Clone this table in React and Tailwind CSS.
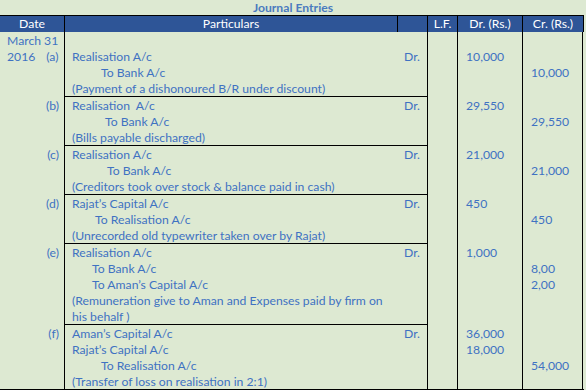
import React from "react"

const entries = [
  {
    date: [
      <span key="1">March 31</span>,
      <span key="2" className="flex"><span>2016</span><span className="ml-[11px]">(a)</span></span>,
    ],
    dateAlign: "left",
    lines: [
      { text: "" },
      { text: "Realisation A/c", dr: true, amt: "10,000" },
      { text: "To Bank A/c", indent: 29, cr: "10,000" },
      { text: "(Payment of a dishonoured B/R under discount)" },
    ],
  },
  {
    date: ["(b)"],
    lines: [
      { text: "Realisation  A/c", dr: true, amt: "29,550" },
      { text: "To Bank A/c", indent: 33, cr: "29,550" },
      { text: "(Bills payable discharged)" },
    ],
  },
  {
    date: ["(c)"],
    lines: [
      { text: "Realisation A/c", dr: true, amt: "21,000" },
      { text: "To Bank A/c", indent: 35, cr: "21,000" },
      { text: "(Creditors took over stock & balance paid in cash)" },
    ],
  },
  {
    date: ["(d)"],
    lines: [
      { text: "Rajat’s Capital A/c", dr: true, amt: "450" },
      { text: "To Realisation A/c", indent: 23, cr: "450" },
      { text: "(Unrecorded old typewriter taken over by Rajat)" },
    ],
  },
  {
    date: ["(e)"],
    lines: [
      { text: "Realisation A/c", dr: true, amt: "1,000" },
      { text: "To Bank A/c", indent: 20, cr: "8,00" },
      { text: "To Aman’s Capital A/c", indent: 20, cr: "2,00" },
      { text: "(Remuneration give to Aman and Expenses paid by firm on" },
      { text: "his behalf )" },
    ],
  },
  {
    date: ["(f)"],
    last: true,
    lines: [
      { text: "Aman’s Capital A/c", dr: true, amt: "36,000" },
      { text: "Rajat’s Capital A/c", amt: "18,000" },
      { text: "To Realisation A/c", indent: 29, cr: "54,000" },
      { text: "(Transfer of loss on realisation in 2:1)" },
    ],
  },
]

const Entry = ({ entry }) => (
  <div className="grid grid-cols-[65px_363px_30px_65px_60px]">
    <div className={`border-r border-black whitespace-nowrap ${entry.dateAlign === "left" ? "pl-[7px]" : "text-right pr-[5px]"}`}>
      {entry.date.map((d, i) => (
        <div key={i} className="h-[16px] pt-[1px]">{d}</div>
      ))}
    </div>
    <div className={`border-r border-black ${entry.last ? "" : "border-b"}`}>
      {entry.lines.map((l, i) => (
        <div key={i} className="h-[16px] pt-[1px] flex justify-between pl-[7px] pr-[7px] whitespace-pre">
          <span style={{ paddingLeft: l.indent || 0 }}>{l.text}</span>
          {l.dr && <span>Dr.</span>}
        </div>
      ))}
    </div>
    <div className="border-r border-black" />
    <div className="border-r border-black pl-[8px]">
      {entry.lines.map((l, i) => (
        <div key={i} className="h-[16px] pt-[1px]">{l.amt || ""}</div>
      ))}
    </div>
    <div className="border-r border-black pl-[8px]">
      {entry.lines.map((l, i) => (
        <div key={i} className="h-[16px] pt-[1px]">{l.cr || ""}</div>
      ))}
    </div>
  </div>
)

export default function App() {
  return (
    <div className="w-[586px] h-[390px] bg-[#dde9d2] overflow-hidden font-['Lato',sans-serif] text-[12.2px] leading-[16px] text-[#3f72c2]">
      <div className="h-[15px] text-center font-bold text-[#4a7bbf] leading-[16px]">Journal Entries</div>
      <div className="w-[584px] border-b border-black">
        <div className="grid grid-cols-[65px_333px_30px_30px_65px_61px] h-[17px] bg-[#2e5597] text-white border-t border-black text-center leading-[16px]">
          <div className="border-r border-black">Date</div>
          <div className="border-r border-black">Particulars</div>
          <div className="border-r border-black" />
          <div className="border-r border-black">L.F.</div>
          <div className="border-r border-black">Dr. (Rs.)</div>
          <div className="border-r border-black">Cr. (Rs.)</div>
        </div>
        {entries.map((e, i) => (
          <Entry key={i} entry={e} />
        ))}
      </div>
      <div className="h-[1px] mt-[2px] bg-[#9bbb59]" />
    </div>
  )
}
